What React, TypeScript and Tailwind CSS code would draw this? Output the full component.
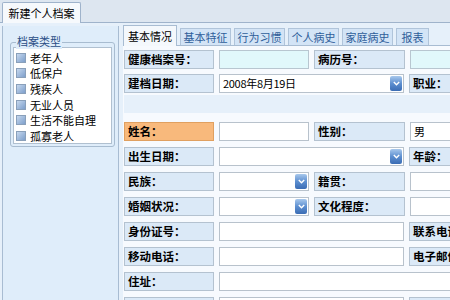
import React from 'react';

// ─── Helpers ───────────────────────────────────────────────

const FONT = { fontFamily: '"Noto Sans CJK SC", "Noto Sans", sans-serif' };

function Label({ text, w = 'w-[90px]', orange = false }: { text: string; w?: string; orange?: boolean }) {
  return (
    <div
      className={`${w} h-[19px] shrink-0 border px-[3px] text-[11.5px] leading-[17px] font-bold text-black ${
        orange ? 'border-[#e0a060] bg-[#f8b97c]' : 'border-[#b4c2d0] bg-[#dbe9f7]'
      }`}
    >
      {text}
    </div>
  );
}

function Input({ w = 'w-[90px]', cyan = false, value = '' }: { w?: string; cyan?: boolean; value?: string }) {
  return (
    <div
      className={`${w} h-[19px] shrink-0 border px-[3px] text-[11px] leading-[17px] text-black ${
        cyan ? 'border-[#b8c6d0] bg-[#e1f8fb]' : 'border-[#b8c2cc] bg-white'
      }`}
    >
      {value}
    </div>
  );
}

function Combo({ w = 'w-[90px]', value = '' }: { w?: string; value?: string }) {
  return (
    <div className={`${w} flex h-[19px] shrink-0 items-center border border-[#b8c2cc] bg-white pl-[3px] pr-[1px]`}>
      <span className="flex-1 text-[11px] leading-[17px] tracking-[-0.3px] text-black">{value}</span>
      <span className="flex h-[15px] w-[12px] items-center justify-center rounded-[2px] bg-gradient-to-b from-[#a8c8ec] via-[#5d8fd0] to-[#3a6cb4]">
        <svg width="7" height="5" viewBox="0 0 7 5">
          <path d="M0.8 1 L3.5 3.8 L6.2 1" fill="none" stroke="white" strokeWidth="1.4" />
        </svg>
      </span>
    </div>
  );
}

function Row({ children }: { children: React.ReactNode }) {
  return <div className="flex gap-[5px]">{children}</div>;
}

const TYPES = ['老年人', '低保户', '残疾人', '无业人员', '生活不能自理', '孤寡老人'];
const TABS = ['基本特征', '行为习惯', '个人病史', '家庭病史', '报表'];

// ─── Component ───────────────────────────────────────────────

export default function App() {
  return (
    <div className="flex h-[300px] w-[450px] flex-col overflow-hidden bg-[#e2ebf5]" style={FONT}>
      {/* Top tab bar */}
      <div className="flex h-[23px] shrink-0 items-end border-b border-[#9fb3cb] bg-[#dde6f0] pl-[2px]">
        <div className="-mb-px h-[21px] w-[79px] rounded-t-[2px] border border-b-0 border-[#9fb3cb] bg-[#f6f9fc] text-center text-[11px] leading-[20px] text-black">
          新建个人档案
        </div>
      </div>

      <div className="flex flex-1 bg-[#e6f0fa] pt-[3px] pl-[2px]">
        {/* Left panel */}
        <div className="w-[117px] shrink-0 border-l border-r border-[#a8bcd2] bg-[#dfedfa] pt-[16px] pl-[7px] pr-[3px]">
          <div className="relative h-[105px] rounded-[3px] border border-[#a8bcd0] p-[2px] pt-[4px]">
            <span className="absolute -top-[9px] left-[5px] bg-[#dfedfa] px-[1px] text-[11px] leading-[15px] text-[#2a4e86]">
              档案类型
            </span>
            <div className="h-full border border-[#b0c0d0] bg-white pt-[2px]">
              {TYPES.map((t) => (
                <div key={t} className="flex h-[15.6px] items-center gap-[4px] pl-[2px]">
                  <span className="h-[10px] w-[10px] border border-[#8aa0ba] bg-gradient-to-br from-[#c6d8ee] to-[#7e9fcb]" />
                  <span className="text-[11px] leading-[14px] text-black">{t}</span>
                </div>
              ))}
            </div>
          </div>
        </div>

        {/* Right panel */}
        <div className="flex flex-1 flex-col pl-[4px]">
          {/* Tabs */}
          <div className="flex h-[20px] shrink-0 items-end gap-[3px] border-b border-[#a8bcd2]">
            <div className="-mb-px h-[21px] w-[54px] border border-b-0 border-[#a8bcd2] bg-[#f4f8fc] text-center text-[11px] leading-[20px] text-black">
              基本情况
            </div>
            {TABS.map((t) => (
              <div
                key={t}
                className={`h-[17px] ${t === '报表' ? 'w-[33px]' : 'w-[51px]'} border border-b-0 border-[#b0c4da] bg-[#d3e4f6] text-center text-[11px] leading-[16px] text-[#2f5e9a]`}
              >
                {t}
              </div>
            ))}
          </div>

          {/* Form */}
          <div className="flex flex-1 flex-col bg-[#f7fafe] pt-[4px] pl-[1px]">
            <div className="flex flex-col gap-[5px]">
              <Row>
                <Label text="健康档案号：" />
                <Input cyan />
                <Label text="病历号：" w="w-[91px]" />
                <Input cyan w="w-[60px]" />
              </Row>
              <Row>
                <Label text="建档日期：" />
                <Combo w="w-[185px]" value="2008年8月19日" />
                <Label text="职业：" />
              </Row>
            </div>
            <div className="mt-[2px] h-[18px] bg-[#e6f0fa]" />
            <div className="mt-[9px] flex flex-col gap-[6px]">
              <Row>
                <Label text="姓名：" orange />
                <Input />
                <Label text="性别：" w="w-[91px]" />
                <Input w="w-[60px]" value="男" />
              </Row>
              <Row>
                <Label text="出生日期：" />
                <Combo w="w-[185px]" />
                <Label text="年龄：" />
              </Row>
              <Row>
                <Label text="民族：" />
                <Combo />
                <Label text="籍贯：" w="w-[91px]" />
                <Input w="w-[60px]" />
              </Row>
              <Row>
                <Label text="婚姻状况：" />
                <Combo />
                <Label text="文化程度：" w="w-[91px]" />
                <Input w="w-[60px]" />
              </Row>
              <Row>
                <Label text="身份证号：" />
                <Input w="w-[185px]" />
                <Label text="联系电话：" />
              </Row>
              <Row>
                <Label text="移动电话：" />
                <Input w="w-[185px]" />
                <Label text="电子邮件：" />
              </Row>
              <Row>
                <Label text="住址：" />
                <Input w="w-[240px]" />
              </Row>
              <Row>
                <Label text="工作单位：" />
                <Input w="w-[185px]" />
                <Label text="单位电话：" />
              </Row>
            </div>
          </div>
        </div>
      </div>
    </div>
  );
}
